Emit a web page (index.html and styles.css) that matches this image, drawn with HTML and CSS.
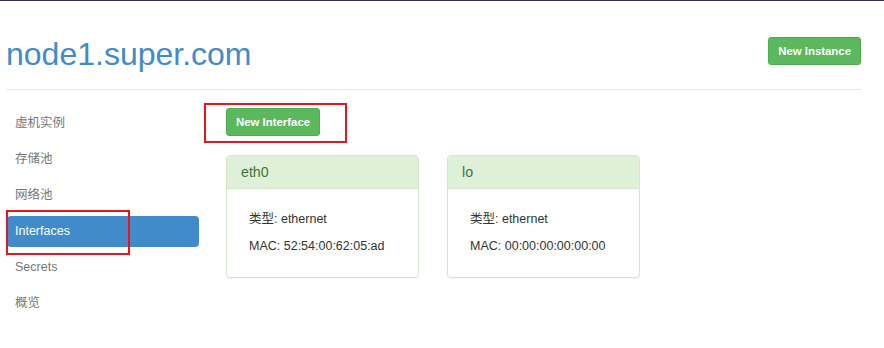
FILE: index.html
```html
<!DOCTYPE html>
<html lang="zh">
<head>
<meta charset="utf-8">
<title>node1.super.com</title>
<link rel="stylesheet" href="styles.css">
</head>
<body>
<div class="topline"></div>
<div class="page">
  <header class="head">
    <h1 class="title">node1.super.com</h1>
    <button class="btn btn-success head-btn">New Instance</button>
  </header>
  <hr class="rule">
  <div class="layout">
    <nav class="side">
      <a class="pill">虚机实例</a>
      <a class="pill">存储池</a>
      <a class="pill">网络池</a>
      <a class="pill active">Interfaces</a>
      <a class="pill">Secrets</a>
      <a class="pill">概览</a>
    </nav>
    <main class="main">
      <button class="btn btn-success">New Interface</button>
      <div class="cards">
        <section class="card">
          <div class="card-head">eth0</div>
          <div class="card-body">
            <p>类型: ethernet</p>
            <p>MAC: 52:54:00:62:05:ad</p>
          </div>
        </section>
        <section class="card">
          <div class="card-head">lo</div>
          <div class="card-body">
            <p>类型: ethernet</p>
            <p>MAC: 00:00:00:00:00:00</p>
          </div>
        </section>
      </div>
    </main>
  </div>
</div>
<div class="mark mark-btn"></div>
<div class="mark mark-nav"></div>
</body>
</html>
```
FILE: styles.css
```css
* { box-sizing: border-box; }
html, body { margin: 0; padding: 0; background: #fff; }
body {
  position: relative;
  width: 884px;
  height: 348px;
  overflow: hidden;
  font-family: "Liberation Sans", Arial, "Noto Sans CJK SC", sans-serif;
  font-size: 12.5px;
  color: #333;
}
.topline { height: 1px; background: #3d2b55; }
.page { padding: 0 23px 0 6px; }
.head {
  display: flex;
  justify-content: space-between;
  align-items: flex-start;
  padding-top: 33px;
}
.title {
  margin: 0;
  font-size: 32px;
  line-height: 40px;
  font-weight: normal;
  color: #428bca;
}
.head-btn { margin-top: 3px; }
.rule {
  margin: 15px 0 0;
  border: 0;
  border-top: 1px solid #e6e6e6;
  height: 0;
}
.btn {
  display: inline-block;
  height: 28px;
  padding: 0 9px;
  font-family: "Liberation Sans", Arial, sans-serif;
  font-size: 11.4px;
  font-weight: bold;
  color: #fff;
  border: 1px solid #4cae4c;
  border-radius: 3px;
  background: #5cb85c;
}
.layout {
  display: flex;
  align-items: flex-start;
  margin-top: 18px;
}
.side {
  display: flex;
  flex-direction: column;
  gap: 5px;
  width: 192px;
  margin-left: 1px;
}
.pill {
  display: block;
  height: 31px;
  line-height: 31px;
  padding: 0 8px;
  color: #777;
  border-radius: 4px;
}
.pill.active { background: #428bca; color: #fff; }
.main { margin-left: 27px; }
.cards {
  display: flex;
  gap: 28px;
  margin-top: 19px;
}
.card {
  width: 193px;
  border: 1px solid #d6e9c6;
  border-radius: 4px;
  box-shadow: 0 1px 1px rgba(0,0,0,0.05);
  overflow: hidden;
}
.card-head {
  height: 33px;
  line-height: 32px;
  padding: 0 14px;
  background: #dff0d8;
  border-bottom: 1px solid #d6e9c6;
  color: #3c763d;
  font-size: 14.2px;
}
.card-body { padding: 21px 22px 22px; }
.card-body p { margin: 0; line-height: 18px; }
.card-body p + p { margin-top: 9px; }
.mark {
  position: absolute;
  border: 2px solid #e8141e;
}
.mark-btn { left: 204px; top: 103px; width: 143px; height: 40px; }
.mark-nav { left: 6px; top: 210px; width: 124px; height: 45px; }
```
